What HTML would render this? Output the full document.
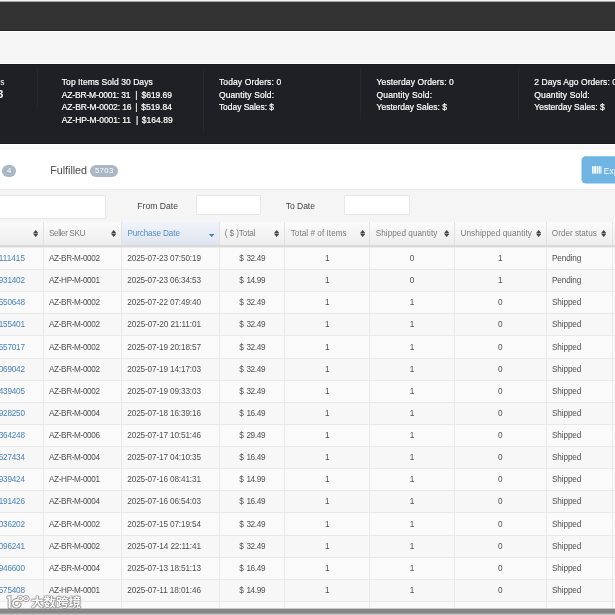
<!DOCTYPE html>
<html lang="en">
<head>
<meta charset="utf-8">
<title>Orders</title>
<style>
html,body{margin:0;padding:0;}
body{width:615px;height:615px;overflow:hidden;position:relative;background:#f6f6f6;font-family:"Liberation Sans","Noto Sans CJK SC",sans-serif;color:#444;}
.abs{position:absolute;}
.t{position:absolute;white-space:pre;}
#topstrip{left:0;top:0;width:615px;height:3px;background:linear-gradient(#fbfbfb 0,#f4f4f4 0.8px,#343434 2.5px);}
#topbar{left:0;top:2.5px;width:615px;height:27.6px;background:#333;border-bottom:0.9px solid #282828;box-shadow:0 1.2px 0 #fff;}
#stats{left:0;top:64.4px;width:615px;height:79.5px;background:#1f1f26;box-sizing:border-box;border-top:1px solid #19191e;border-bottom:0.8px solid #16161b;box-shadow:0 -1.2px 0 #fff,0 1.3px 0 #fff;}
.div{position:absolute;top:68.8px;height:63px;width:1px;background:#27272e;}
#panel{left:0;top:149.5px;width:615px;height:39.5px;background:#fff;}
#filter{left:0;top:189px;width:615px;height:33px;background:#f5f5f5;border-top:1px solid #ececec;box-sizing:border-box;}
.inp{position:absolute;background:#fff;border:1px solid #e7e7e7;box-sizing:border-box;border-radius:1px;}
.badge{position:absolute;background:#a9b8c4;color:#fff;border-radius:6px;height:12px;line-height:12px;font-size:7px;text-align:center;}
#thead{left:0;top:222px;width:615px;height:23px;background:linear-gradient(#fbfbfb,#ededed);border-bottom:2px solid #d9d9d9;box-shadow:0 1px 0 #ececec;}
#thead .h{position:absolute;top:0;height:23px;box-sizing:border-box;border-right:1px solid #e2e2e2;}
.sort{position:absolute;top:229.7px;width:5.4px;height:7px;margin-left:-0.3px;}
.row{position:absolute;left:0;width:615px;height:22.13px;border-bottom:1px solid #e9e9e9;box-sizing:border-box;}
.row.odd{background:#fafafa;}
.row.even{background:#f7f7f7;}
.vl{position:absolute;top:247.3px;height:361.5px;width:1px;background:#e9e9e9;}
#sb{left:0;top:608px;width:615px;height:7px;background:linear-gradient(#c9c9c9 0,#c9c9c9 1px,#878787 1px,#878787 5px,#a0a0a0 5px,#a0a0a0 6px,#c3c3c3 6px);}
#sb2{display:none;}
#wm{left:31.4px;top:594.9px;font-size:12.5px;color:#fff;font-weight:bold;white-space:nowrap;line-height:17px;text-shadow:0 0 1px #6f6f6f,0 0 1px #6f6f6f,0 0 1px #777,0 0 2px #888,0.4px 0.4px 1px #888;}
</style>
</head>
<body>
<div id="topstrip" class="abs"></div>
<div id="topbar" class="abs"></div>

<div id="stats" class="abs"></div>
<div class="div" style="left:37px;height:38px"></div>
<div class="div" style="left:203px"></div>
<div class="div" style="left:360px;height:50px"></div>
<div class="div" style="left:517.5px;height:50px"></div>

<div id="panel" class="abs"></div>
<div class="badge" style="left:2.2px;top:165px;width:14px;"></div>
<div class="badge" style="left:90.2px;top:165px;width:28px;"></div>
<svg class="abs" id="export" style="left:575px;top:150px" width="40" height="40" viewBox="575 150 40 40">
  <rect x="581.5" y="156.2" width="60" height="27.3" rx="4.2" fill="#6fb4e3"/>
  <g fill="#fff" opacity="0.92"><rect x="592.0" y="166.2" width="1.7" height="7.4"/><rect x="594.1" y="166.2" width="2.1" height="7.4"/><rect x="596.6" y="166.2" width="1.6" height="7.4"/><rect x="598.6" y="166.2" width="1.3" height="7.4"/><rect x="600.3" y="166.2" width="1.2" height="7.4"/></g>
</svg>

<div id="filter" class="abs"></div>
<div class="inp" style="left:-20px;top:195px;width:125.5px;height:23.5px;"></div>
<div class="inp" style="left:195.7px;top:195px;width:65.5px;height:19.5px;"></div>
<div class="inp" style="left:344.3px;top:195px;width:65.5px;height:19.5px;"></div>

<div id="thead" class="abs">
  <div class="h" style="left:0;width:43.9px"></div>
  <div class="h" style="left:43.9px;width:77.9px"></div>
  <div class="h" style="left:121.8px;width:98px;background:linear-gradient(#f0f3f9,#dfe5f0)"></div>
  <div class="h" style="left:219.8px;width:65px"></div>
  <div class="h" style="left:284.8px;width:85px"></div>
  <div class="h" style="left:369.8px;width:85.2px"></div>
  <div class="h" style="left:455px;width:91.8px"></div>
  <div class="h" style="left:546.8px;width:66.2px"></div>
</div>
<svg class="sort" preserveAspectRatio="none" style="left:32.8px" viewBox="0 0 5 7"><path d="M2.5 0L5 3.2H0Z M0 3.8H5L2.5 7Z" fill="#444"/></svg>
<svg class="sort" preserveAspectRatio="none" style="left:111.2px" viewBox="0 0 5 7"><path d="M2.5 0L5 3.2H0Z M0 3.8H5L2.5 7Z" fill="#444"/></svg>
<svg class="sort" preserveAspectRatio="none" style="left:209.3px;top:233.6px;height:3px" viewBox="0 0 5 3"><path d="M0 0H5L2.5 3Z" fill="#3f7fc0"/></svg>
<svg class="sort" preserveAspectRatio="none" style="left:274.3px" viewBox="0 0 5 7"><path d="M2.5 0L5 3.2H0Z M0 3.8H5L2.5 7Z" fill="#444"/></svg>
<svg class="sort" preserveAspectRatio="none" style="left:359.8px" viewBox="0 0 5 7"><path d="M2.5 0L5 3.2H0Z M0 3.8H5L2.5 7Z" fill="#444"/></svg>
<svg class="sort" preserveAspectRatio="none" style="left:444.5px" viewBox="0 0 5 7"><path d="M2.5 0L5 3.2H0Z M0 3.8H5L2.5 7Z" fill="#444"/></svg>
<svg class="sort" preserveAspectRatio="none" style="left:535.8px" viewBox="0 0 5 7"><path d="M2.5 0L5 3.2H0Z M0 3.8H5L2.5 7Z" fill="#444"/></svg>
<svg class="sort" preserveAspectRatio="none" style="left:601.4px" viewBox="0 0 5 7"><path d="M2.5 0L5 3.2H0Z M0 3.8H5L2.5 7Z" fill="#444"/></svg>

<div class="row odd" style="top:247.90px"></div>
<div class="row even" style="top:270.03px"></div>
<div class="row odd" style="top:292.15px"></div>
<div class="row even" style="top:314.28px"></div>
<div class="row odd" style="top:336.41px"></div>
<div class="row even" style="top:358.53px"></div>
<div class="row odd" style="top:380.66px"></div>
<div class="row even" style="top:402.79px"></div>
<div class="row odd" style="top:424.92px"></div>
<div class="row even" style="top:447.04px"></div>
<div class="row odd" style="top:469.17px"></div>
<div class="row even" style="top:491.30px"></div>
<div class="row odd" style="top:513.42px"></div>
<div class="row even" style="top:535.55px"></div>
<div class="row odd" style="top:557.68px"></div>
<div class="row even" style="top:579.80px"></div>
<div class="row odd" style="top:601.93px"></div>
<div class="vl" style="left:43.4px"></div>
<div class="vl" style="left:121.3px"></div>
<div class="vl" style="left:219.3px"></div>
<div class="vl" style="left:284.3px"></div>
<div class="vl" style="left:369.3px"></div>
<div class="vl" style="left:454.2px"></div>
<div class="vl" style="left:546.3px"></div>
<div class="vl" style="left:612.3px"></div>

<div id="txt" style="position:absolute;left:0;top:0;width:615px;height:615px;will-change:transform;">
<span class="t" style="left:61.80px;top:77px;font-size:8.5px;line-height:10.625px;letter-spacing:0.054px;color:#fff;-webkit-text-stroke:0.2px #fff;">Top Items Sold 30 Days</span>
<span class="t" style="left:61.80px;top:90px;font-size:8.5px;line-height:10.625px;letter-spacing:-0.176px;color:#fff;-webkit-text-stroke:0.2px #fff;">AZ-BR-M-0001: 31</span>
<span class="t" style="left:135.29px;top:90px;font-size:8.5px;line-height:10.625px;color:#fff;-webkit-text-stroke:0.2px #fff;">|</span>
<span class="t" style="left:141.60px;top:90px;font-size:8.5px;line-height:10.625px;letter-spacing:-0.072px;color:#fff;-webkit-text-stroke:0.2px #fff;">$619.69</span>
<span class="t" style="left:61.80px;top:102px;font-size:8.5px;line-height:10.625px;letter-spacing:-0.110px;color:#fff;-webkit-text-stroke:0.2px #fff;">AZ-BR-M-0002: 16</span>
<span class="t" style="left:135.29px;top:102px;font-size:8.5px;line-height:10.625px;color:#fff;-webkit-text-stroke:0.2px #fff;">|</span>
<span class="t" style="left:141.20px;top:102px;font-size:8.5px;line-height:10.625px;letter-spacing:-0.006px;color:#fff;-webkit-text-stroke:0.2px #fff;">$519.84</span>
<span class="t" style="left:61.80px;top:115px;font-size:8.5px;line-height:10.625px;letter-spacing:-0.094px;color:#fff;-webkit-text-stroke:0.2px #fff;">AZ-HP-M-0001: 11</span>
<span class="t" style="left:135.89px;top:115px;font-size:8.5px;line-height:10.625px;color:#fff;-webkit-text-stroke:0.2px #fff;">|</span>
<span class="t" style="left:141.70px;top:115px;font-size:8.5px;line-height:10.625px;letter-spacing:0.061px;color:#fff;-webkit-text-stroke:0.2px #fff;">$164.89</span>
<span class="t" style="left:218.90px;top:77px;font-size:8.5px;line-height:10.625px;letter-spacing:0.130px;color:#fff;-webkit-text-stroke:0.2px #fff;">Today Orders: 0</span>
<span class="t" style="left:218.90px;top:90px;font-size:8.5px;line-height:10.625px;letter-spacing:0.139px;color:#fff;-webkit-text-stroke:0.2px #fff;">Quantity Sold:</span>
<span class="t" style="left:218.90px;top:102px;font-size:8.5px;line-height:10.625px;letter-spacing:-0.044px;color:#fff;-webkit-text-stroke:0.2px #fff;">Today Sales: $</span>
<span class="t" style="left:376.60px;top:77px;font-size:8.5px;line-height:10.625px;letter-spacing:0.107px;color:#fff;-webkit-text-stroke:0.2px #fff;">Yesterday Orders: 0</span>
<span class="t" style="left:376.60px;top:90px;font-size:8.5px;line-height:10.625px;letter-spacing:0.155px;color:#fff;-webkit-text-stroke:0.2px #fff;">Quantity Sold:</span>
<span class="t" style="left:376.60px;top:102px;font-size:8.5px;line-height:10.625px;letter-spacing:-0.010px;color:#fff;-webkit-text-stroke:0.2px #fff;">Yesterday Sales: $</span>
<span class="t" style="left:534.30px;top:77px;font-size:8.5px;line-height:10.625px;letter-spacing:0.075px;color:#fff;-webkit-text-stroke:0.2px #fff;">2 Days Ago Orders: 0</span>
<span class="t" style="left:534.30px;top:90px;font-size:8.5px;line-height:10.625px;letter-spacing:0.155px;color:#fff;-webkit-text-stroke:0.2px #fff;">Quantity Sold:</span>
<span class="t" style="left:534.30px;top:102px;font-size:8.5px;line-height:10.625px;letter-spacing:-0.010px;color:#fff;-webkit-text-stroke:0.2px #fff;">Yesterday Sales: $</span>
<span class="t" style="left:-22.00px;top:77px;font-size:8.5px;line-height:10.625px;letter-spacing:0.103px;color:#fff;">Orders</span>
<span class="t" style="left:-25.00px;top:88px;font-size:10.4px;line-height:13.000px;letter-spacing:0.571px;color:#fff;font-weight:bold;">1,123</span>
<span class="t" style="left:50.20px;top:164px;font-size:10.8px;line-height:13.500px;letter-spacing:-0.040px;color:#4a4a4a;">Fulfilled</span>
<span class="t" style="left:7.03px;top:166px;font-size:7.8px;line-height:9.750px;color:#fff;">4</span>
<span class="t" style="left:94.90px;top:166px;font-size:7.8px;line-height:9.750px;letter-spacing:0.347px;color:#fff;">5703</span>
<span class="t" style="left:603.70px;top:166px;font-size:8.3px;line-height:10.375px;letter-spacing:0.323px;color:#fff;">Export</span>
<span class="t" style="left:137.30px;top:201px;font-size:8.6px;line-height:10.750px;letter-spacing:0.013px;color:#444;">From Date</span>
<span class="t" style="left:285.70px;top:201px;font-size:8.6px;line-height:10.750px;letter-spacing:-0.054px;color:#444;">To Date</span>
<span class="t" style="left:49.00px;top:229px;font-size:8.2px;line-height:10.250px;letter-spacing:-0.405px;color:#7b7b7b;">Seller SKU</span>
<span class="t" style="left:127.40px;top:229px;font-size:8.2px;line-height:10.250px;letter-spacing:-0.131px;color:#558dc8;">Purchase Date</span>
<span class="t" style="left:224.80px;top:229px;font-size:8.2px;line-height:10.250px;letter-spacing:-0.118px;color:#7b7b7b;">( $ )Total</span>
<span class="t" style="left:290.70px;top:229px;font-size:8.2px;line-height:10.250px;letter-spacing:0.031px;color:#7b7b7b;">Total # of Items</span>
<span class="t" style="left:375.70px;top:229px;font-size:8.2px;line-height:10.250px;letter-spacing:0.040px;color:#7b7b7b;">Shipped quantity</span>
<span class="t" style="left:460.50px;top:229px;font-size:8.2px;line-height:10.250px;letter-spacing:0.076px;color:#7b7b7b;">Unshipped quantity</span>
<span class="t" style="left:551.80px;top:229px;font-size:8.2px;line-height:10.250px;letter-spacing:-0.006px;color:#7b7b7b;">Order status</span>
<span class="t" style="left:-1.30px;top:254px;font-size:8.2px;line-height:10.250px;letter-spacing:0.038px;color:#4883bd;">111415</span>
<span class="t" style="left:49.00px;top:254px;font-size:8.2px;line-height:10.250px;letter-spacing:-0.369px;color:#505050;">AZ-BR-M-0002</span>
<span class="t" style="left:127.30px;top:254px;font-size:8.2px;line-height:10.250px;letter-spacing:-0.130px;color:#505050;">2025-07-23 07:50:19</span>
<span class="t" style="left:239.27px;top:254px;font-size:8.2px;line-height:10.250px;color:#505050;">$</span>
<span class="t" style="left:246.40px;top:254px;font-size:8.2px;line-height:10.250px;letter-spacing:-0.350px;color:#505050;">32.49</span>
<span class="t" style="left:324.92px;top:254px;font-size:8.2px;line-height:10.250px;color:#505050;">1</span>
<span class="t" style="left:409.72px;top:254px;font-size:8.2px;line-height:10.250px;color:#505050;">0</span>
<span class="t" style="left:497.92px;top:254px;font-size:8.2px;line-height:10.250px;color:#505050;">1</span>
<span class="t" style="left:552.00px;top:254px;font-size:8.2px;line-height:10.250px;letter-spacing:-0.127px;color:#505050;">Pending</span>
<span class="t" style="left:-1.30px;top:276px;font-size:8.2px;line-height:10.250px;letter-spacing:-0.206px;color:#4883bd;">931402</span>
<span class="t" style="left:49.00px;top:276px;font-size:8.2px;line-height:10.250px;letter-spacing:-0.369px;color:#505050;">AZ-HP-M-0001</span>
<span class="t" style="left:127.30px;top:276px;font-size:8.2px;line-height:10.250px;letter-spacing:-0.130px;color:#505050;">2025-07-23 06:34:53</span>
<span class="t" style="left:239.27px;top:276px;font-size:8.2px;line-height:10.250px;color:#505050;">$</span>
<span class="t" style="left:246.40px;top:276px;font-size:8.2px;line-height:10.250px;letter-spacing:-0.350px;color:#505050;">14.99</span>
<span class="t" style="left:324.92px;top:276px;font-size:8.2px;line-height:10.250px;color:#505050;">1</span>
<span class="t" style="left:409.72px;top:276px;font-size:8.2px;line-height:10.250px;color:#505050;">0</span>
<span class="t" style="left:497.92px;top:276px;font-size:8.2px;line-height:10.250px;color:#505050;">1</span>
<span class="t" style="left:552.00px;top:276px;font-size:8.2px;line-height:10.250px;letter-spacing:-0.127px;color:#505050;">Pending</span>
<span class="t" style="left:-1.30px;top:298px;font-size:8.2px;line-height:10.250px;letter-spacing:-0.206px;color:#4883bd;">550648</span>
<span class="t" style="left:49.00px;top:298px;font-size:8.2px;line-height:10.250px;letter-spacing:-0.369px;color:#505050;">AZ-BR-M-0002</span>
<span class="t" style="left:127.30px;top:298px;font-size:8.2px;line-height:10.250px;letter-spacing:-0.130px;color:#505050;">2025-07-22 07:49:40</span>
<span class="t" style="left:239.27px;top:298px;font-size:8.2px;line-height:10.250px;color:#505050;">$</span>
<span class="t" style="left:246.40px;top:298px;font-size:8.2px;line-height:10.250px;letter-spacing:-0.350px;color:#505050;">32.49</span>
<span class="t" style="left:324.92px;top:298px;font-size:8.2px;line-height:10.250px;color:#505050;">1</span>
<span class="t" style="left:409.72px;top:298px;font-size:8.2px;line-height:10.250px;color:#505050;">1</span>
<span class="t" style="left:497.92px;top:298px;font-size:8.2px;line-height:10.250px;color:#505050;">0</span>
<span class="t" style="left:552.00px;top:298px;font-size:8.2px;line-height:10.250px;letter-spacing:-0.127px;color:#505050;">Shipped</span>
<span class="t" style="left:-1.30px;top:320px;font-size:8.2px;line-height:10.250px;letter-spacing:-0.206px;color:#4883bd;">155401</span>
<span class="t" style="left:49.00px;top:320px;font-size:8.2px;line-height:10.250px;letter-spacing:-0.369px;color:#505050;">AZ-BR-M-0002</span>
<span class="t" style="left:127.30px;top:320px;font-size:8.2px;line-height:10.250px;letter-spacing:-0.096px;color:#505050;">2025-07-20 21:11:01</span>
<span class="t" style="left:239.27px;top:320px;font-size:8.2px;line-height:10.250px;color:#505050;">$</span>
<span class="t" style="left:246.40px;top:320px;font-size:8.2px;line-height:10.250px;letter-spacing:-0.350px;color:#505050;">32.49</span>
<span class="t" style="left:324.92px;top:320px;font-size:8.2px;line-height:10.250px;color:#505050;">1</span>
<span class="t" style="left:409.72px;top:320px;font-size:8.2px;line-height:10.250px;color:#505050;">1</span>
<span class="t" style="left:497.92px;top:320px;font-size:8.2px;line-height:10.250px;color:#505050;">0</span>
<span class="t" style="left:552.00px;top:320px;font-size:8.2px;line-height:10.250px;letter-spacing:-0.127px;color:#505050;">Shipped</span>
<span class="t" style="left:-1.30px;top:343px;font-size:8.2px;line-height:10.250px;letter-spacing:-0.206px;color:#4883bd;">557017</span>
<span class="t" style="left:49.00px;top:343px;font-size:8.2px;line-height:10.250px;letter-spacing:-0.369px;color:#505050;">AZ-BR-M-0002</span>
<span class="t" style="left:127.30px;top:343px;font-size:8.2px;line-height:10.250px;letter-spacing:-0.130px;color:#505050;">2025-07-19 20:18:57</span>
<span class="t" style="left:239.27px;top:343px;font-size:8.2px;line-height:10.250px;color:#505050;">$</span>
<span class="t" style="left:246.40px;top:343px;font-size:8.2px;line-height:10.250px;letter-spacing:-0.350px;color:#505050;">32.49</span>
<span class="t" style="left:324.92px;top:343px;font-size:8.2px;line-height:10.250px;color:#505050;">1</span>
<span class="t" style="left:409.72px;top:343px;font-size:8.2px;line-height:10.250px;color:#505050;">1</span>
<span class="t" style="left:497.92px;top:343px;font-size:8.2px;line-height:10.250px;color:#505050;">0</span>
<span class="t" style="left:552.00px;top:343px;font-size:8.2px;line-height:10.250px;letter-spacing:-0.127px;color:#505050;">Shipped</span>
<span class="t" style="left:-1.30px;top:365px;font-size:8.2px;line-height:10.250px;letter-spacing:-0.206px;color:#4883bd;">069042</span>
<span class="t" style="left:49.00px;top:365px;font-size:8.2px;line-height:10.250px;letter-spacing:-0.369px;color:#505050;">AZ-BR-M-0002</span>
<span class="t" style="left:127.30px;top:365px;font-size:8.2px;line-height:10.250px;letter-spacing:-0.130px;color:#505050;">2025-07-19 14:17:03</span>
<span class="t" style="left:239.27px;top:365px;font-size:8.2px;line-height:10.250px;color:#505050;">$</span>
<span class="t" style="left:246.40px;top:365px;font-size:8.2px;line-height:10.250px;letter-spacing:-0.350px;color:#505050;">32.49</span>
<span class="t" style="left:324.92px;top:365px;font-size:8.2px;line-height:10.250px;color:#505050;">1</span>
<span class="t" style="left:409.72px;top:365px;font-size:8.2px;line-height:10.250px;color:#505050;">1</span>
<span class="t" style="left:497.92px;top:365px;font-size:8.2px;line-height:10.250px;color:#505050;">0</span>
<span class="t" style="left:552.00px;top:365px;font-size:8.2px;line-height:10.250px;letter-spacing:-0.127px;color:#505050;">Shipped</span>
<span class="t" style="left:-1.30px;top:387px;font-size:8.2px;line-height:10.250px;letter-spacing:-0.206px;color:#4883bd;">439405</span>
<span class="t" style="left:49.00px;top:387px;font-size:8.2px;line-height:10.250px;letter-spacing:-0.369px;color:#505050;">AZ-BR-M-0002</span>
<span class="t" style="left:127.30px;top:387px;font-size:8.2px;line-height:10.250px;letter-spacing:-0.130px;color:#505050;">2025-07-19 09:33:03</span>
<span class="t" style="left:239.27px;top:387px;font-size:8.2px;line-height:10.250px;color:#505050;">$</span>
<span class="t" style="left:246.40px;top:387px;font-size:8.2px;line-height:10.250px;letter-spacing:-0.350px;color:#505050;">32.49</span>
<span class="t" style="left:324.92px;top:387px;font-size:8.2px;line-height:10.250px;color:#505050;">1</span>
<span class="t" style="left:409.72px;top:387px;font-size:8.2px;line-height:10.250px;color:#505050;">1</span>
<span class="t" style="left:497.92px;top:387px;font-size:8.2px;line-height:10.250px;color:#505050;">0</span>
<span class="t" style="left:552.00px;top:387px;font-size:8.2px;line-height:10.250px;letter-spacing:-0.127px;color:#505050;">Shipped</span>
<span class="t" style="left:-1.30px;top:409px;font-size:8.2px;line-height:10.250px;letter-spacing:-0.206px;color:#4883bd;">928250</span>
<span class="t" style="left:49.00px;top:409px;font-size:8.2px;line-height:10.250px;letter-spacing:-0.369px;color:#505050;">AZ-BR-M-0004</span>
<span class="t" style="left:127.30px;top:409px;font-size:8.2px;line-height:10.250px;letter-spacing:-0.130px;color:#505050;">2025-07-18 16:39:16</span>
<span class="t" style="left:239.27px;top:409px;font-size:8.2px;line-height:10.250px;color:#505050;">$</span>
<span class="t" style="left:246.40px;top:409px;font-size:8.2px;line-height:10.250px;letter-spacing:-0.350px;color:#505050;">16.49</span>
<span class="t" style="left:324.92px;top:409px;font-size:8.2px;line-height:10.250px;color:#505050;">1</span>
<span class="t" style="left:409.72px;top:409px;font-size:8.2px;line-height:10.250px;color:#505050;">1</span>
<span class="t" style="left:497.92px;top:409px;font-size:8.2px;line-height:10.250px;color:#505050;">0</span>
<span class="t" style="left:552.00px;top:409px;font-size:8.2px;line-height:10.250px;letter-spacing:-0.127px;color:#505050;">Shipped</span>
<span class="t" style="left:-1.30px;top:431px;font-size:8.2px;line-height:10.250px;letter-spacing:-0.206px;color:#4883bd;">364248</span>
<span class="t" style="left:49.00px;top:431px;font-size:8.2px;line-height:10.250px;letter-spacing:-0.369px;color:#505050;">AZ-BR-M-0006</span>
<span class="t" style="left:127.30px;top:431px;font-size:8.2px;line-height:10.250px;letter-spacing:-0.130px;color:#505050;">2025-07-17 10:51:46</span>
<span class="t" style="left:239.27px;top:431px;font-size:8.2px;line-height:10.250px;color:#505050;">$</span>
<span class="t" style="left:246.40px;top:431px;font-size:8.2px;line-height:10.250px;letter-spacing:-0.350px;color:#505050;">29.49</span>
<span class="t" style="left:324.92px;top:431px;font-size:8.2px;line-height:10.250px;color:#505050;">1</span>
<span class="t" style="left:409.72px;top:431px;font-size:8.2px;line-height:10.250px;color:#505050;">1</span>
<span class="t" style="left:497.92px;top:431px;font-size:8.2px;line-height:10.250px;color:#505050;">0</span>
<span class="t" style="left:552.00px;top:431px;font-size:8.2px;line-height:10.250px;letter-spacing:-0.127px;color:#505050;">Shipped</span>
<span class="t" style="left:-1.30px;top:453px;font-size:8.2px;line-height:10.250px;letter-spacing:-0.206px;color:#4883bd;">527434</span>
<span class="t" style="left:49.00px;top:453px;font-size:8.2px;line-height:10.250px;letter-spacing:-0.369px;color:#505050;">AZ-BR-M-0004</span>
<span class="t" style="left:127.30px;top:453px;font-size:8.2px;line-height:10.250px;letter-spacing:-0.130px;color:#505050;">2025-07-17 04:10:35</span>
<span class="t" style="left:239.27px;top:453px;font-size:8.2px;line-height:10.250px;color:#505050;">$</span>
<span class="t" style="left:246.40px;top:453px;font-size:8.2px;line-height:10.250px;letter-spacing:-0.350px;color:#505050;">16.49</span>
<span class="t" style="left:324.92px;top:453px;font-size:8.2px;line-height:10.250px;color:#505050;">1</span>
<span class="t" style="left:409.72px;top:453px;font-size:8.2px;line-height:10.250px;color:#505050;">1</span>
<span class="t" style="left:497.92px;top:453px;font-size:8.2px;line-height:10.250px;color:#505050;">0</span>
<span class="t" style="left:552.00px;top:453px;font-size:8.2px;line-height:10.250px;letter-spacing:-0.127px;color:#505050;">Shipped</span>
<span class="t" style="left:-1.30px;top:475px;font-size:8.2px;line-height:10.250px;letter-spacing:-0.206px;color:#4883bd;">939424</span>
<span class="t" style="left:49.00px;top:475px;font-size:8.2px;line-height:10.250px;letter-spacing:-0.369px;color:#505050;">AZ-HP-M-0001</span>
<span class="t" style="left:127.30px;top:475px;font-size:8.2px;line-height:10.250px;letter-spacing:-0.130px;color:#505050;">2025-07-16 08:41:31</span>
<span class="t" style="left:239.27px;top:475px;font-size:8.2px;line-height:10.250px;color:#505050;">$</span>
<span class="t" style="left:246.40px;top:475px;font-size:8.2px;line-height:10.250px;letter-spacing:-0.350px;color:#505050;">14.99</span>
<span class="t" style="left:324.92px;top:475px;font-size:8.2px;line-height:10.250px;color:#505050;">1</span>
<span class="t" style="left:409.72px;top:475px;font-size:8.2px;line-height:10.250px;color:#505050;">1</span>
<span class="t" style="left:497.92px;top:475px;font-size:8.2px;line-height:10.250px;color:#505050;">0</span>
<span class="t" style="left:552.00px;top:475px;font-size:8.2px;line-height:10.250px;letter-spacing:-0.127px;color:#505050;">Shipped</span>
<span class="t" style="left:-1.30px;top:497px;font-size:8.2px;line-height:10.250px;letter-spacing:-0.206px;color:#4883bd;">191426</span>
<span class="t" style="left:49.00px;top:497px;font-size:8.2px;line-height:10.250px;letter-spacing:-0.369px;color:#505050;">AZ-BR-M-0004</span>
<span class="t" style="left:127.30px;top:497px;font-size:8.2px;line-height:10.250px;letter-spacing:-0.130px;color:#505050;">2025-07-16 06:54:03</span>
<span class="t" style="left:239.27px;top:497px;font-size:8.2px;line-height:10.250px;color:#505050;">$</span>
<span class="t" style="left:246.40px;top:497px;font-size:8.2px;line-height:10.250px;letter-spacing:-0.350px;color:#505050;">16.49</span>
<span class="t" style="left:324.92px;top:497px;font-size:8.2px;line-height:10.250px;color:#505050;">1</span>
<span class="t" style="left:409.72px;top:497px;font-size:8.2px;line-height:10.250px;color:#505050;">1</span>
<span class="t" style="left:497.92px;top:497px;font-size:8.2px;line-height:10.250px;color:#505050;">0</span>
<span class="t" style="left:552.00px;top:497px;font-size:8.2px;line-height:10.250px;letter-spacing:-0.127px;color:#505050;">Shipped</span>
<span class="t" style="left:-1.30px;top:520px;font-size:8.2px;line-height:10.250px;letter-spacing:-0.206px;color:#4883bd;">036202</span>
<span class="t" style="left:49.00px;top:520px;font-size:8.2px;line-height:10.250px;letter-spacing:-0.369px;color:#505050;">AZ-BR-M-0002</span>
<span class="t" style="left:127.30px;top:520px;font-size:8.2px;line-height:10.250px;letter-spacing:-0.130px;color:#505050;">2025-07-15 07:19:54</span>
<span class="t" style="left:239.27px;top:520px;font-size:8.2px;line-height:10.250px;color:#505050;">$</span>
<span class="t" style="left:246.40px;top:520px;font-size:8.2px;line-height:10.250px;letter-spacing:-0.350px;color:#505050;">32.49</span>
<span class="t" style="left:324.92px;top:520px;font-size:8.2px;line-height:10.250px;color:#505050;">1</span>
<span class="t" style="left:409.72px;top:520px;font-size:8.2px;line-height:10.250px;color:#505050;">1</span>
<span class="t" style="left:497.92px;top:520px;font-size:8.2px;line-height:10.250px;color:#505050;">0</span>
<span class="t" style="left:552.00px;top:520px;font-size:8.2px;line-height:10.250px;letter-spacing:-0.127px;color:#505050;">Shipped</span>
<span class="t" style="left:-1.30px;top:542px;font-size:8.2px;line-height:10.250px;letter-spacing:-0.206px;color:#4883bd;">096241</span>
<span class="t" style="left:49.00px;top:542px;font-size:8.2px;line-height:10.250px;letter-spacing:-0.369px;color:#505050;">AZ-BR-M-0002</span>
<span class="t" style="left:127.30px;top:542px;font-size:8.2px;line-height:10.250px;letter-spacing:-0.096px;color:#505050;">2025-07-14 22:11:41</span>
<span class="t" style="left:239.27px;top:542px;font-size:8.2px;line-height:10.250px;color:#505050;">$</span>
<span class="t" style="left:246.40px;top:542px;font-size:8.2px;line-height:10.250px;letter-spacing:-0.350px;color:#505050;">32.49</span>
<span class="t" style="left:324.92px;top:542px;font-size:8.2px;line-height:10.250px;color:#505050;">1</span>
<span class="t" style="left:409.72px;top:542px;font-size:8.2px;line-height:10.250px;color:#505050;">1</span>
<span class="t" style="left:497.92px;top:542px;font-size:8.2px;line-height:10.250px;color:#505050;">0</span>
<span class="t" style="left:552.00px;top:542px;font-size:8.2px;line-height:10.250px;letter-spacing:-0.127px;color:#505050;">Shipped</span>
<span class="t" style="left:-1.30px;top:564px;font-size:8.2px;line-height:10.250px;letter-spacing:-0.206px;color:#4883bd;">946600</span>
<span class="t" style="left:49.00px;top:564px;font-size:8.2px;line-height:10.250px;letter-spacing:-0.369px;color:#505050;">AZ-BR-M-0004</span>
<span class="t" style="left:127.30px;top:564px;font-size:8.2px;line-height:10.250px;letter-spacing:-0.130px;color:#505050;">2025-07-13 18:51:13</span>
<span class="t" style="left:239.27px;top:564px;font-size:8.2px;line-height:10.250px;color:#505050;">$</span>
<span class="t" style="left:246.40px;top:564px;font-size:8.2px;line-height:10.250px;letter-spacing:-0.350px;color:#505050;">16.49</span>
<span class="t" style="left:324.92px;top:564px;font-size:8.2px;line-height:10.250px;color:#505050;">1</span>
<span class="t" style="left:409.72px;top:564px;font-size:8.2px;line-height:10.250px;color:#505050;">1</span>
<span class="t" style="left:497.92px;top:564px;font-size:8.2px;line-height:10.250px;color:#505050;">0</span>
<span class="t" style="left:552.00px;top:564px;font-size:8.2px;line-height:10.250px;letter-spacing:-0.127px;color:#505050;">Shipped</span>
<span class="t" style="left:-1.30px;top:586px;font-size:8.2px;line-height:10.250px;letter-spacing:-0.206px;color:#4883bd;">575408</span>
<span class="t" style="left:49.00px;top:586px;font-size:8.2px;line-height:10.250px;letter-spacing:-0.369px;color:#505050;">AZ-HP-M-0001</span>
<span class="t" style="left:127.30px;top:586px;font-size:8.2px;line-height:10.250px;letter-spacing:-0.096px;color:#505050;">2025-07-11 18:01:46</span>
<span class="t" style="left:239.27px;top:586px;font-size:8.2px;line-height:10.250px;color:#505050;">$</span>
<span class="t" style="left:246.40px;top:586px;font-size:8.2px;line-height:10.250px;letter-spacing:-0.350px;color:#505050;">14.99</span>
<span class="t" style="left:324.92px;top:586px;font-size:8.2px;line-height:10.250px;color:#505050;">1</span>
<span class="t" style="left:409.72px;top:586px;font-size:8.2px;line-height:10.250px;color:#505050;">1</span>
<span class="t" style="left:497.92px;top:586px;font-size:8.2px;line-height:10.250px;color:#505050;">0</span>
<span class="t" style="left:552.00px;top:586px;font-size:8.2px;line-height:10.250px;letter-spacing:-0.127px;color:#505050;">Shipped</span>
</div>

<div id="sb" class="abs"></div>
<div id="sb2" class="abs"></div>
<svg class="abs" style="left:5px;top:593px" width="28" height="17" viewBox="5 593 28 17">
  <g fill="none" stroke="#7d7d7d" stroke-opacity="0.8" stroke-linecap="round">
    <path d="M8.2 597.4L9.6 597.2V607.2" stroke-width="3.8"/>
    <path d="M17.6 600C14.4 599.2 12.4 602 13.3 604.7C14.4 607.6 18.8 607.5 19.9 604.3" stroke-width="3.6"/>
    <ellipse cx="20.2" cy="598.6" rx="2.3" ry="2.0" stroke-width="2.8"/>
    <ellipse cx="25.9" cy="598.6" rx="2.3" ry="2.0" stroke-width="2.8"/>
  </g>
  <g fill="none" stroke="#fff" stroke-linecap="round">
    <path d="M8.2 597.4L9.6 597.2V607.2" stroke-width="2"/>
    <path d="M17.6 600C14.4 599.2 12.4 602 13.3 604.7C14.4 607.6 18.8 607.5 19.9 604.3" stroke-width="1.8"/>
    <ellipse cx="20.2" cy="598.6" rx="2.3" ry="2.0" stroke-width="1.1"/>
    <ellipse cx="25.9" cy="598.6" rx="2.3" ry="2.0" stroke-width="1.1"/>
  </g>
</svg>
<div id="wm" class="abs" style="will-change:transform">大数跨境</div>
</body>
</html>
